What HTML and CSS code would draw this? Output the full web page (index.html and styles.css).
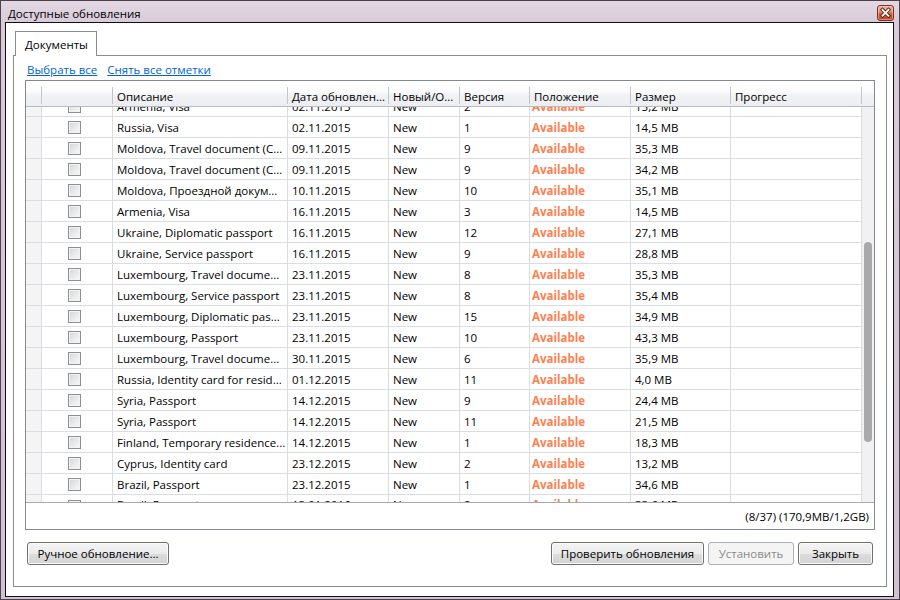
FILE: index.html
```html
<!DOCTYPE html>
<html lang="ru">
<head>
<meta charset="utf-8">
<title>Доступные обновления</title>
<link rel="stylesheet" href="styles.css">
</head>
<body>
<div class="window">
  <div class="titlebar">
    <span class="title">Доступные обновления</span>
    <div class="close">
      <svg width="17" height="16" viewBox="0 0 17 16">
        <path d="M5.5 4.8 L11.5 10.8 M11.5 4.8 L5.5 10.8" stroke="#5a2418" stroke-width="3.6" stroke-linecap="square"/>
        <path d="M5.5 4.8 L11.5 10.8 M11.5 4.8 L5.5 10.8" stroke="#ffffff" stroke-width="1.8" stroke-linecap="square"/>
      </svg>
    </div>
  </div>
  <div class="client">
    <div class="tabs"><div class="tab">Документы</div></div>
    <div class="panel">
      <div class="links"><a class="link">Выбрать все</a><a class="link">Снять все отметки</a></div>
      <div class="gridbox">
        <div class="grid">
          <div class="ghead">
            <div class="hc c-rh"></div>
            <div class="hc c-cb"></div>
            <div class="hc c-desc">Описание</div>
            <div class="hc c-date">Дата обновлен...</div>
            <div class="hc c-new">Новый/О...</div>
            <div class="hc c-ver">Версия</div>
            <div class="hc c-pos">Положение</div>
            <div class="hc c-size">Размер</div>
            <div class="hc c-prog">Прогресс</div>
            <div class="hfill"></div>
          </div>
          <div class="gbody">
            <div class="rows">
              <div class="row first"><div class="c c-rh"></div><div class="c c-cb"><span class="cb"></span></div><div class="c c-desc">Armenia, Visa</div><div class="c c-date">02.11.2015</div><div class="c c-new">New</div><div class="c c-ver">2</div><div class="c c-pos av">Available</div><div class="c c-size">15,2 MB</div><div class="c c-prog"></div></div>
              <div class="row"><div class="c c-rh"></div><div class="c c-cb"><span class="cb"></span></div><div class="c c-desc">Russia, Visa</div><div class="c c-date">02.11.2015</div><div class="c c-new">New</div><div class="c c-ver">1</div><div class="c c-pos av">Available</div><div class="c c-size">14,5 MB</div><div class="c c-prog"></div></div>
              <div class="row"><div class="c c-rh"></div><div class="c c-cb"><span class="cb"></span></div><div class="c c-desc">Moldova, Travel document (C...</div><div class="c c-date">09.11.2015</div><div class="c c-new">New</div><div class="c c-ver">9</div><div class="c c-pos av">Available</div><div class="c c-size">35,3 MB</div><div class="c c-prog"></div></div>
              <div class="row"><div class="c c-rh"></div><div class="c c-cb"><span class="cb"></span></div><div class="c c-desc">Moldova, Travel document (C...</div><div class="c c-date">09.11.2015</div><div class="c c-new">New</div><div class="c c-ver">9</div><div class="c c-pos av">Available</div><div class="c c-size">34,2 MB</div><div class="c c-prog"></div></div>
              <div class="row"><div class="c c-rh"></div><div class="c c-cb"><span class="cb"></span></div><div class="c c-desc">Moldova, Проездной докум...</div><div class="c c-date">10.11.2015</div><div class="c c-new">New</div><div class="c c-ver">10</div><div class="c c-pos av">Available</div><div class="c c-size">35,1 MB</div><div class="c c-prog"></div></div>
              <div class="row"><div class="c c-rh"></div><div class="c c-cb"><span class="cb"></span></div><div class="c c-desc">Armenia, Visa</div><div class="c c-date">16.11.2015</div><div class="c c-new">New</div><div class="c c-ver">3</div><div class="c c-pos av">Available</div><div class="c c-size">14,5 MB</div><div class="c c-prog"></div></div>
              <div class="row"><div class="c c-rh"></div><div class="c c-cb"><span class="cb"></span></div><div class="c c-desc">Ukraine, Diplomatic passport</div><div class="c c-date">16.11.2015</div><div class="c c-new">New</div><div class="c c-ver">12</div><div class="c c-pos av">Available</div><div class="c c-size">27,1 MB</div><div class="c c-prog"></div></div>
              <div class="row"><div class="c c-rh"></div><div class="c c-cb"><span class="cb"></span></div><div class="c c-desc">Ukraine, Service passport</div><div class="c c-date">16.11.2015</div><div class="c c-new">New</div><div class="c c-ver">9</div><div class="c c-pos av">Available</div><div class="c c-size">28,8 MB</div><div class="c c-prog"></div></div>
              <div class="row"><div class="c c-rh"></div><div class="c c-cb"><span class="cb"></span></div><div class="c c-desc">Luxembourg, Travel docume...</div><div class="c c-date">23.11.2015</div><div class="c c-new">New</div><div class="c c-ver">8</div><div class="c c-pos av">Available</div><div class="c c-size">35,3 MB</div><div class="c c-prog"></div></div>
              <div class="row"><div class="c c-rh"></div><div class="c c-cb"><span class="cb"></span></div><div class="c c-desc">Luxembourg, Service passport</div><div class="c c-date">23.11.2015</div><div class="c c-new">New</div><div class="c c-ver">8</div><div class="c c-pos av">Available</div><div class="c c-size">35,4 MB</div><div class="c c-prog"></div></div>
              <div class="row"><div class="c c-rh"></div><div class="c c-cb"><span class="cb"></span></div><div class="c c-desc">Luxembourg, Diplomatic pas...</div><div class="c c-date">23.11.2015</div><div class="c c-new">New</div><div class="c c-ver">15</div><div class="c c-pos av">Available</div><div class="c c-size">34,9 MB</div><div class="c c-prog"></div></div>
              <div class="row"><div class="c c-rh"></div><div class="c c-cb"><span class="cb"></span></div><div class="c c-desc">Luxembourg, Passport</div><div class="c c-date">23.11.2015</div><div class="c c-new">New</div><div class="c c-ver">10</div><div class="c c-pos av">Available</div><div class="c c-size">43,3 MB</div><div class="c c-prog"></div></div>
              <div class="row"><div class="c c-rh"></div><div class="c c-cb"><span class="cb"></span></div><div class="c c-desc">Luxembourg, Travel docume...</div><div class="c c-date">30.11.2015</div><div class="c c-new">New</div><div class="c c-ver">6</div><div class="c c-pos av">Available</div><div class="c c-size">35,9 MB</div><div class="c c-prog"></div></div>
              <div class="row"><div class="c c-rh"></div><div class="c c-cb"><span class="cb"></span></div><div class="c c-desc">Russia, Identity card for resid...</div><div class="c c-date">01.12.2015</div><div class="c c-new">New</div><div class="c c-ver">11</div><div class="c c-pos av">Available</div><div class="c c-size">4,0 MB</div><div class="c c-prog"></div></div>
              <div class="row"><div class="c c-rh"></div><div class="c c-cb"><span class="cb"></span></div><div class="c c-desc">Syria, Passport</div><div class="c c-date">14.12.2015</div><div class="c c-new">New</div><div class="c c-ver">9</div><div class="c c-pos av">Available</div><div class="c c-size">24,4 MB</div><div class="c c-prog"></div></div>
              <div class="row"><div class="c c-rh"></div><div class="c c-cb"><span class="cb"></span></div><div class="c c-desc">Syria, Passport</div><div class="c c-date">14.12.2015</div><div class="c c-new">New</div><div class="c c-ver">11</div><div class="c c-pos av">Available</div><div class="c c-size">21,5 MB</div><div class="c c-prog"></div></div>
              <div class="row"><div class="c c-rh"></div><div class="c c-cb"><span class="cb"></span></div><div class="c c-desc">Finland, Temporary residence...</div><div class="c c-date">14.12.2015</div><div class="c c-new">New</div><div class="c c-ver">1</div><div class="c c-pos av">Available</div><div class="c c-size">18,3 MB</div><div class="c c-prog"></div></div>
              <div class="row"><div class="c c-rh"></div><div class="c c-cb"><span class="cb"></span></div><div class="c c-desc">Cyprus, Identity card</div><div class="c c-date">23.12.2015</div><div class="c c-new">New</div><div class="c c-ver">2</div><div class="c c-pos av">Available</div><div class="c c-size">13,2 MB</div><div class="c c-prog"></div></div>
              <div class="row"><div class="c c-rh"></div><div class="c c-cb"><span class="cb"></span></div><div class="c c-desc">Brazil, Passport</div><div class="c c-date">23.12.2015</div><div class="c c-new">New</div><div class="c c-ver">1</div><div class="c c-pos av">Available</div><div class="c c-size">34,6 MB</div><div class="c c-prog"></div></div>
              <div class="row last"><div class="c c-rh"></div><div class="c c-cb"><span class="cb"></span></div><div class="c c-desc">Brazil, Passport</div><div class="c c-date">13.01.2016</div><div class="c c-new">New</div><div class="c c-ver">2</div><div class="c c-pos av">Available</div><div class="c c-size">33,6 MB</div><div class="c c-prog"></div></div>
            </div>
            <div class="vscroll"><div class="thumb"></div></div>
          </div>
        </div>
        <div class="status">(8/37) (170,9MB/1,2GB)</div>
      </div>
      <div class="buttons">
        <button class="btn w-manual">Ручное обновление...</button>
        <div class="spacer"></div>
        <button class="btn w-check">Проверить обновления</button>
        <button class="btn w-install" disabled>Установить</button>
        <button class="btn w-close">Закрыть</button>
      </div>
    </div>
  </div>
</div>
</body>
</html>
```
FILE: styles.css
```css
html, body {
  margin: 0;
  padding: 0;
}
body {
  font-family: "Open Sans", "Noto Sans", "DejaVu Sans", sans-serif;
  font-size: 11.5px;
  color: #000;
}
.window {
  width: 900px;
  height: 600px;
  box-sizing: border-box;
  border: 1px solid #4b404b;
  padding: 0 5px 2px 4px;
  display: flex;
  flex-direction: column;
  background: linear-gradient(180deg, #e2d8e2 0px, #d9cbd9 21px, #d2c1d3 100%);
}
.titlebar {
  height: 21px;
  display: flex;
  align-items: flex-start;
  flex: none;
}
.title {
  margin-left: 3px;
  line-height: 16px;
  margin-top: 5px;
}
.close {
  margin-left: auto;
  margin-top: 4px;
  width: 17px;
  height: 16px;
  box-sizing: border-box;
  border: 1px solid #7b3124;
  border-radius: 3px;
  background: linear-gradient(180deg, #eeb3a4 0%, #df8a73 45%, #cf5538 55%, #c9442a 100%);
  box-shadow: inset 0 0 0 1px rgba(255, 220, 210, 0.45);
  display: flex;
}
.close svg {
  margin: -1px;
}
.client {
  flex: 1;
  background: #fff;
  border: 1px solid #101010;
  padding: 8px 6px 9px 7px;
  display: flex;
  flex-direction: column;
  min-height: 0;
}
.tabs {
  display: flex;
  flex: none;
  position: relative;
  z-index: 1;
  margin-bottom: -1px;
}
.tab {
  margin-left: 2px;
  width: 82px;
  height: 25px;
  box-sizing: border-box;
  border: 1px solid #898c95;
  border-bottom: none;
  background: #fff;
  padding-left: 9px;
  padding-top: 1px;
  line-height: 23px;
}
.panel {
  flex: 1;
  border: 1px solid #898c95;
  display: flex;
  flex-direction: column;
  padding-top: 6px;
  min-height: 0;
}
.links {
  display: flex;
  gap: 10px;
  padding-left: 13px;
  height: 16px;
  line-height: 16px;
}
.link {
  color: #0066cc;
  text-decoration: underline;
  cursor: pointer;
}
.gridbox {
  margin: 2px 11px 0 11px;
  height: 450px;
  box-sizing: border-box;
  border: 1px solid #828790;
  display: flex;
  flex-direction: column;
}
.grid {
  border-bottom: 1px solid #a5a9b0;
  display: flex;
  flex-direction: column;
}
.ghead {
  display: flex;
  height: 25px;
  border-bottom: 1px solid #b8bcc2;
  background: linear-gradient(180deg, #ffffff 0%, #fbfbfc 45%, #f1f2f4 55%, #eceef1 100%);
}
.hc {
  box-sizing: border-box;
  margin-top: 6px;
  height: 17px;
  padding-top: 2px;
  line-height: 15px;
  border-right: 1px solid #c2c5cb;
  padding-left: 4px;
  white-space: nowrap;
  overflow: hidden;
}
.hfill {
  flex: 1;
}
.c-rh { width: 16px; flex: none; padding-left: 0; }
.c-cb { width: 71px; flex: none; }
.c-desc { width: 175px; flex: none; }
.c-date { width: 101px; flex: none; }
.c-new { width: 71px; flex: none; }
.c-ver { width: 70px; flex: none; }
.c-pos { width: 101px; flex: none; }
.c-size { width: 100px; flex: none; }
.c-prog { width: 131px; flex: none; }
.gbody {
  display: flex;
  height: 395px;
  overflow: hidden;
}
.rows {
  width: 836px;
  flex: none;
}
.row {
  display: flex;
  height: 21px;
  box-sizing: border-box;
  border-bottom: 1px solid #dadde3;
}
.row.first {
  margin-top: -11px;
}
.c {
  box-sizing: border-box;
  height: 20px;
  padding-top: 2px;
  line-height: 18px;
  border-right: 1px solid #dadde3;
  padding-left: 4px;
  white-space: nowrap;
  overflow: hidden;
}
.row.last .c {
  padding-top: 1px;
}
.row .c-rh {
  background: #f4f4f5;
}
.row .c-cb {
  padding-top: 0;
  padding-left: 26px;
  display: flex;
  align-items: center;
}
.cb {
  width: 13px;
  height: 13px;
  margin-top: 1px;
  box-sizing: border-box;
  border: 1px solid #8e8f8f;
  background: linear-gradient(135deg, #d3d5d8 0%, #ebecee 60%, #f8f8f8 100%);
  box-shadow: inset 0 0 0 1px #f3f3f3;
}
.row .av {
  color: #ff7f50;
  font-weight: bold;
  padding-left: 2px;
}
.vscroll {
  flex: 1;
  background: #f1f1f1;
}
.thumb {
  width: 8px;
  height: 200px;
  margin: 135px 0 0 2px;
  border-radius: 4px;
  background: #a9a9a9;
}
.status {
  height: 26px;
  line-height: 26px;
  padding-top: 1px;
  box-sizing: border-box;
  text-align: right;
  padding-right: 5px;
}
.buttons {
  display: flex;
  gap: 4px;
  margin-top: 12px;
  padding: 0 13px;
}
.spacer {
  flex: 1;
}
.btn {
  height: 23px;
  box-sizing: border-box;
  font: inherit;
  color: #000;
  border: 1px solid #707070;
  border-radius: 3px;
  background: linear-gradient(180deg, #f4f4f4 0%, #ebebeb 50%, #dddddd 51%, #d2d3d5 100%);
  box-shadow: inset 0 0 0 1px #fbfbfb;
  padding: 0;
  text-align: center;
}
.btn:disabled {
  color: #8a8a8a;
  border-color: #adb2b5;
  background: #f4f4f4;
  box-shadow: none;
}
.w-manual { width: 142px; }
.w-check { width: 153px; }
.w-install { width: 86px; }
.w-close { width: 75px; }
```
